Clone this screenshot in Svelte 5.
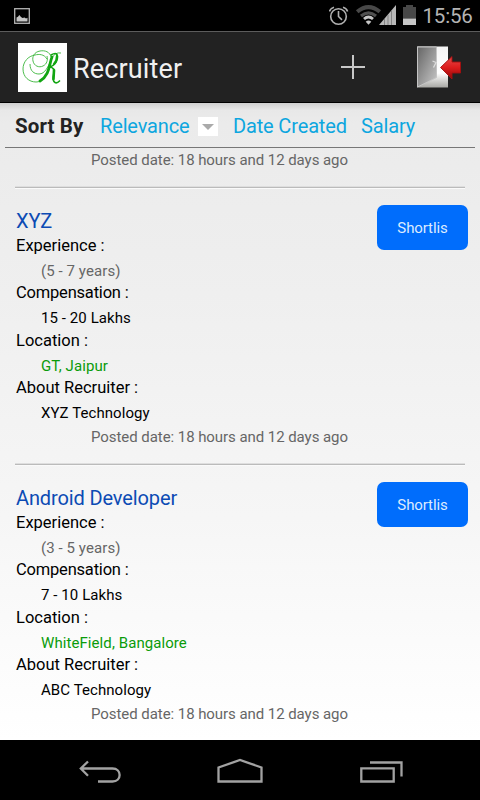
<script>
    const posted = 'Posted date: 18 hours and 12 days ago';

    const jobs = [
        {
            title: 'XYZ',
            experience: '(5 - 7 years)',
            compensation: '15 - 20 Lakhs',
            location: 'GT, Jaipur',
            recruiter: 'XYZ Technology'
        },
        {
            title: 'Android Developer',
            experience: '(3 - 5 years)',
            compensation: '7 - 10 Lakhs',
            location: 'WhiteField, Bangalore',
            recruiter: 'ABC Technology'
        }
    ];
</script>

<div class="screen">
    <div class="status-bar">
        <svg class="picture" width="16" height="16" viewBox="0 0 16 16">
            <rect x="0.7" y="0.7" width="14.6" height="14.6" fill="none" stroke="#b4b4b4" stroke-width="1.3" />
            <path d="M2.5 13.5V9.5L4 8.7L5.3 7L7 9L8.5 10L10.5 9.5L12 10.5L13.5 9.7V13.5Z" fill="#c4c4c4" />
        </svg>
        <svg width="90" height="30" viewBox="0 0 90 30">
            <!-- alarm -->
            <g fill="none" stroke="#b0b0b0" stroke-width="1.6">
                <circle cx="9.5" cy="16.5" r="7.8" />
                <path d="M9.5 11V16.5L13 19.8" />
                <path d="M0.4 11.5Q1.5 8.3 5 7.3M14 7.3Q17.5 8.3 18.6 11.5" />
            </g>
            <!-- wifi -->
            <g fill="none">
                <path d="M28.2 11.8Q39.5 2.5 50.8 11.8" stroke="#484848" stroke-width="4" />
                <path d="M32 16Q39.5 9.8 47 16" stroke="#505050" stroke-width="3.2" />
                <path d="M35 19Q39.5 15 44 19" stroke="#c6c6c6" stroke-width="2.8" />
                <path d="M36.7 21.7Q39.5 19.2 42.3 21.7L39.5 24.8Z" fill="#c6c6c6" />
            </g>
            <!-- signal -->
            <path d="M50 25L67 5V25Z" fill="#b8b8b8" />
            <path d="M55.5 19V25M59 15V25M62.5 11V25" stroke="#838383" stroke-width="1" />
            <!-- battery -->
            <path d="M74 7H77V5H84V7H87V18.5H74Z" fill="#484848" />
            <rect x="74" y="18.5" width="13" height="6.5" fill="#c6c6c6" />
        </svg>
        <span class="clock">15:56</span>
    </div>

    <header class="action-bar">
        <svg class="logo" width="49" height="49" viewBox="0 0 49 49">
            <rect width="49" height="49" fill="#fff" />
            <g fill="none" stroke="#3ab53a" stroke-width="0.9">
                <path d="M29 16C26 11 21 11 17 12C10 13 5 19 5 26C5 34 11 39 18 39C24 39 28 34 30 27" />
                <path d="M33 14C32 9 27 7 22 8C16 9 14 14 15 18C16 23 21 25 25 23C29 21 30 17 29 13" />
                <path d="M12 21C12 28 16 31 21 31C27 31 30 24 34 15Q37 9 43 10" />
            </g>
            <g fill="none" stroke="#12a512" stroke-linecap="round">
                <path d="M34 14C31 21 32 32 22 38" stroke-width="2.8" />
                <path d="M33 12Q40 8 39.5 15Q38 22 32 24" stroke-width="1.5" />
                <path d="M39 13Q39 18 36 21" stroke-width="2.3" />
                <path d="M32 24Q37 25 36 30Q34 38 37 39.5Q39 40.5 41.5 38" stroke-width="1.7" />
                <path d="M36 27L35.5 36" stroke-width="2.6" />
            </g>
        </svg>
        <h1>Recruiter</h1>
        <svg class="plus" width="25" height="24" viewBox="0 0 25 24">
            <path d="M13 0V24M1 12H25" stroke="#c8c8c8" stroke-width="2" />
        </svg>
        <svg class="exit" width="46" height="46" viewBox="0 0 46 46">
            <defs>
                <linearGradient id="door" x1="0" y1="0" x2="1" y2="1">
                    <stop offset="0" stop-color="#656565" />
                    <stop offset="1" stop-color="#c9c9c9" />
                </linearGradient>
                <linearGradient id="light" x1="0" y1="0" x2="0" y2="1">
                    <stop offset="0" stop-color="#f4f4f4" />
                    <stop offset="0.65" stop-color="#fff" />
                    <stop offset="1" stop-color="#a8a8a4" />
                </linearGradient>
                <linearGradient id="arrow" x1="0" y1="0" x2="0" y2="1">
                    <stop offset="0" stop-color="#e84a4a" />
                    <stop offset="0.5" stop-color="#dc1c1c" />
                    <stop offset="1" stop-color="#8e0808" />
                </linearGradient>
            </defs>
            <rect x="1" y="2.5" width="31" height="41" fill="url(#light)" />
            <path d="M1.5 3H20.5V33.5L1.5 43Z" fill="url(#door)" stroke="#c4c4c4" />
            <path d="M16.5 17L20 18.5L17.5 23.5" fill="none" stroke="#ddd" stroke-width="1.3" />
            <path d="M24.5 23.5L36 12.5V18H44.5V29H36V35Z" fill="url(#arrow)" stroke="#a51010" stroke-width="0.9" />
        </svg>
    </header>

    <main>
        <nav class="sort">
            <b>Sort By</b>
            <span class="relevance">Relevance</span>
            <span class="dropdown"><i></i></span>
            <span class="created">Date Created</span>
            <span class="salary">Salary</span>
        </nav>

        <p class="posted first">{posted}</p>

        {#each jobs as job}
            <article>
                <h2>{job.title}</h2>
                <dl>
                    <dt>Experience :</dt>
                    <dd class="muted">{job.experience}</dd>
                    <dt class="compensation">Compensation :</dt>
                    <dd>{job.compensation}</dd>
                    <dt>Location :</dt>
                    <dd class="place">{job.location}</dd>
                    <dt>About Recruiter :</dt>
                    <dd>{job.recruiter}</dd>
                </dl>
                <p class="posted">{posted}</p>
                <button>Shortlis</button>
            </article>
        {/each}
    </main>

    <footer>
        <svg width="480" height="60" viewBox="0 0 480 60" fill="none" stroke="#a2a2a2" stroke-width="2.3">
            <path d="M80.5 28.5H112.5C122 28.5 122 41.5 112.5 41.5H98M88 21.5L80.8 28.5L88 35.8" />
            <path d="M218.5 41.5V27.5L240 20L261.5 27.5V41.5Z" />
            <path d="M361.3 28.3H393.7V41.5H361.3ZM370 22.5H401.5V36.5" />
        </svg>
    </footer>
</div>

<style>
    :global(body) {
        margin: 0;
    }

    .screen {
        width: 480px;
        height: 800px;
        display: flex;
        flex-direction: column;
        overflow: hidden;
        background: #000;
        font-family: Roboto, sans-serif;
    }

    .status-bar {
        box-sizing: border-box;
        height: 32px;
        flex: none;
        display: flex;
        border-bottom: 1px solid #5c5c5c;
        color: #b4b4b4;
    }

    .picture {
        margin: 8px 299px 0 14px;
    }

    .clock {
        margin-left: 3.5px;
        font-size: 20.5px;
        letter-spacing: -0.2px;
        line-height: 32px;
        white-space: nowrap;
    }

    .status-bar svg {
        flex: none;
    }

    .action-bar {
        box-sizing: border-box;
        height: 71px;
        flex: none;
        display: flex;
        align-items: center;
        padding-left: 18px;
        background: #222;
        border-bottom: 1px solid #000;
    }

    h1 {
        width: 267px;
        margin: 0 0 0 6px;
        padding-top: 4px;
        color: #f0f0f0;
        font-size: 27px;
        font-weight: 400;
        letter-spacing: 0.15px;
        line-height: 36px;
    }

    .exit {
        margin-left: 51px;
    }

    main {
        height: 637px;
        flex: none;
        overflow: hidden;
        background: linear-gradient(#cfcfcf 0, #e8e8e8 7px, #ebebeb 20px, #efefef 30%, #f6f6f6 65%, #fff 100%);
    }

    .sort {
        box-sizing: border-box;
        height: 45px;
        margin: 0 5px;
        display: flex;
        align-items: center;
        padding: 2px 0 0 10px;
        border-bottom: 1px solid #777;
        color: #0da6df;
        font-size: 20px;
        letter-spacing: -0.15px;
        white-space: nowrap;
    }

    .sort b {
        width: 85px;
        color: #222;
        font-size: 20.5px;
        font-weight: 700;
        letter-spacing: 0.1px;
    }

    .relevance {
        width: 98px;
    }

    .dropdown {
        width: 20px;
        height: 19px;
        display: flex;
        align-items: center;
        justify-content: center;
        background: #fff;
    }

    .dropdown i {
        margin-top: 2px;
        border: 6px solid transparent;
        border-top-color: #aaa;
        border-bottom: 0;
    }

    .created {
        width: 128px;
        margin-left: 15px;
    }

    .posted {
        margin: 0 0 0 91px;
        color: #666;
        font-size: 15px;
        letter-spacing: -0.06px;
        line-height: 26px;
    }

    .first {
        line-height: 24px;
        padding-bottom: 15px;
    }

    article {
        box-sizing: border-box;
        position: relative;
        height: 277px;
        margin: 0 15px;
        padding-top: 19px;
        border-top: 1px solid #bbb;
        box-shadow: 0 -1px #dedede, inset 0 1px #fafafa;
    }

    article .posted {
        margin-left: 76px;
    }

    h2 {
        margin: 0 0 0 1px;
        color: #0c4bb4;
        font-size: 20px;
        font-weight: 400;
        letter-spacing: -0.12px;
        line-height: 28px;
    }

    dl {
        margin: 0 0 0 1px;
        color: #000;
    }

    dt {
        font-size: 16.5px;
        line-height: 22px;
    }

    .compensation {
        letter-spacing: -0.2px;
    }

    dd {
        margin-left: 25px;
        font-size: 15px;
        letter-spacing: 0.08px;
        line-height: 25.3px;
        padding-top: 2px;
        height: 23.3px;
    }

    .muted {
        color: #666;
    }

    .place {
        color: #0a9b0a;
    }

    button {
        position: absolute;
        top: 17px;
        right: -3px;
        width: 91px;
        height: 45px;
        border: 0;
        border-radius: 7px;
        padding: 0;
        background: #006dfc;
        color: #dcebff;
        font-family: inherit;
        font-size: 15px;
        letter-spacing: -0.1px;
    }

    footer {
        height: 60px;
        flex: none;
        background: #000;
    }
</style>
